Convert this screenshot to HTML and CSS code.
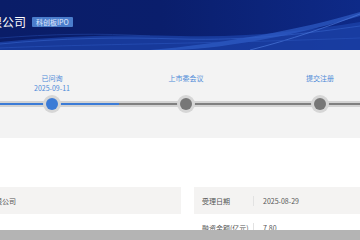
FILE: index.html
```html
<!DOCTYPE html>
<html lang="zh-CN">
<head>
  <meta charset="UTF-8">
  <title>科创板IPO</title>
  <link rel="stylesheet" href="styles.css">
</head>
<body>

  <div class="header">
    <svg class="waves" width="360" height="50" viewBox="0 0 360 50" preserveAspectRatio="none">
      <path d="M0 50 L0 42 C60 36 120 34 180 36 C250 38 310 30 360 22 L360 50 Z" fill="#1c43aa" opacity="0.75"/>
      <path d="M0 44 C60 38 120 37 180 39 C250 41 310 33 360 26" stroke="#3662c9" stroke-width="1" fill="none" opacity="0.6"/>
      <path d="M0 38 C50 34 100 33 150 36" stroke="#1e3f9a" stroke-width="1" fill="none" opacity="0.7"/>
      <path d="M150 50 C220 44 300 30 360 12 L360 16 C300 34 230 48 175 50 Z" fill="#2f5cc6" opacity="0.7"/>
      <path d="M250 50 C290 40 330 26 360 14" stroke="#4a76d8" stroke-width="1" fill="none" opacity="0.7"/>
      <path d="M0 48 C90 44 200 44 360 38" stroke="#2a53bb" stroke-width="1" fill="none" opacity="0.6"/>
    </svg>
    <div class="header-inner">
      <span class="title">某某科技股份有限公司</span>
      <span class="badge">科创板IPO</span>
    </div>
  </div>

  <div class="progress">
    <div class="steps">
      <div class="step done">
        <div class="label"></div>
        <div class="date"></div>
        <div class="track"><span class="dot"></span></div>
      </div>
      <div class="step done">
        <div class="label">已问询</div>
        <div class="date">2025-09-11</div>
        <div class="track"><span class="dot"></span></div>
      </div>
      <div class="step">
        <div class="label">上市委会议</div>
        <div class="date"></div>
        <div class="track"><span class="dot"></span></div>
      </div>
      <div class="step">
        <div class="label">提交注册</div>
        <div class="date"></div>
        <div class="track"><span class="dot"></span></div>
      </div>
    </div>
  </div>

  <div class="info">
    <div class="table">
      <div class="row">
        <div class="key">公司全称</div>
        <div class="val">某某科技股份有限公司</div>
      </div>
      <div class="row">
        <div class="key">所属行业</div>
        <div class="val"></div>
      </div>
    </div>
    <div class="table">
      <div class="row">
        <div class="key">受理日期</div>
        <div class="val">2025-08-29</div>
      </div>
      <div class="row">
        <div class="key">融资金额(亿元)</div>
        <div class="val">7.80</div>
      </div>
    </div>
  </div>

  <div class="bottom-bar"></div>

</body>
</html>
```

FILE: styles.css
```css
body {
  margin: 0;
  font-family: "Noto Sans CJK SC", "Noto Sans", sans-serif;
  background: #fff;
  overflow: hidden;
}

.header {
  position: relative;
  height: 50px;
  background: linear-gradient(90deg, #0a1d68 0%, #0a1e6c 45%, #0e2a88 100%);
  overflow: hidden;
}

.waves {
  position: absolute;
  left: 0;
  top: 0;
}

.header-inner {
  position: relative;
  display: flex;
  align-items: center;
  gap: 6px;
  height: 43px;
  margin-left: -94px;
}

.title {
  color: #fff;
  font-size: 12px;
  white-space: nowrap;
}

.badge {
  background: #4a7dcc;
  color: #e3ecff;
  font-size: 7px;
  line-height: 10px;
  padding: 0 4px;
  border-radius: 1px;
  white-space: nowrap;
}

.progress {
  background: #f3f3f3;
  height: 88px;
  overflow: hidden;
}

.steps {
  display: flex;
  margin-left: -149px;
  padding-top: 23px;
}

.step {
  flex: 0 0 134px;
  text-align: center;
}

.label,
.date {
  font-size: 7px;
  line-height: 10px;
  height: 10px;
  color: #4d8ad8;
  white-space: nowrap;
}

.track {
  position: relative;
  height: 18px;
  margin-top: 2px;
}

.track::before {
  content: "";
  position: absolute;
  left: 0;
  right: 0;
  top: 6px;
  height: 6px;
  background: #d3d3d3;
}

.track::after {
  content: "";
  position: absolute;
  left: 0;
  right: 0;
  top: 8px;
  height: 2px;
  background: #808080;
}

.step.done .track::after {
  background: #3b7bd6;
}

.dot {
  position: absolute;
  left: 50%;
  top: 3px;
  width: 12px;
  height: 12px;
  margin-left: -6px;
  border-radius: 50%;
  background: #777;
  box-shadow: 0 0 0 3px #d6d6d6;
  z-index: 1;
}

.step.done .dot {
  background: #3b7bd6;
}

.info {
  display: grid;
  grid-template-columns: 304px 1fr;
  gap: 13px;
  margin-left: -123px;
  margin-top: 49px;
}

.row {
  display: flex;
  align-items: center;
  height: 27px;
  font-size: 7px;
  color: #555;
  white-space: nowrap;
}

.row:nth-child(odd) {
  background: #f4f3f2;
}

.key {
  flex: 0 0 51px;
  padding-left: 8px;
  border-right: 1px solid #e2e2e2;
  line-height: 10px;
}

.val {
  padding-left: 9px;
}

.bottom-bar {
  position: fixed;
  left: 0;
  right: 0;
  bottom: 0;
  height: 10px;
  background: #b4b4b4;
}
```
